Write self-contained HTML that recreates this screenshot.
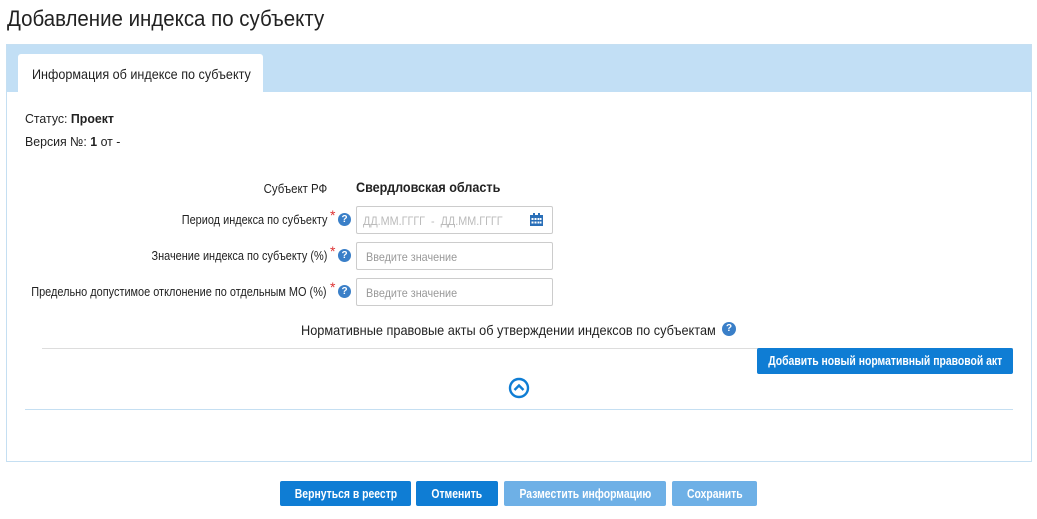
<!DOCTYPE html>
<html><head><meta charset="utf-8"><style>
body{margin:0;width:1037px;height:519px;background:#fff;font-family:"Liberation Sans",sans-serif;color:#222;position:relative;overflow:hidden}
.a{position:absolute;white-space:nowrap}
.c{transform:scaleX(.9);transform-origin:left center}
.cr{transform:scaleX(.88);transform-origin:right center}
.cc{display:inline-block;flex-shrink:0;transform:scaleX(.8);transform-origin:center}
.inp{position:absolute;left:356px;width:195px;height:26px;border:1px solid #ccc;border-radius:2px;background:#fff;font-size:12px;color:#999}
.lbl{position:absolute;right:710px;font-size:13px;white-space:nowrap;transform:scaleX(.84);transform-origin:right center}
.star{position:absolute;left:330px;color:#d33;font-size:14px}
.q{position:absolute;left:338px;width:13px;height:13px;border-radius:50%;background:#3a7fc8;color:#fff;font-size:10px;font-weight:bold;text-align:center;line-height:13px}
.btn{position:absolute;top:481px;height:25px;border-radius:2px;color:#fff;font-size:13px;line-height:25px;font-weight:bold;white-space:nowrap;overflow:hidden;display:flex;justify-content:center}
</style></head><body>
<div class="a" style="left:7px;top:6px;font-size:22px;color:#222;transform:scaleX(.93);transform-origin:left">Добавление индекса по субъекту</div>
<div class="a" style="left:6px;top:44px;width:1024px;height:416px;border:1px solid #c5dff2"></div>
<div class="a" style="left:7px;top:45px;width:1024px;height:47px;background:#c2dff5"></div>
<div class="a" style="left:18px;top:54px;width:245px;height:38px;background:#fff;border-radius:3px 3px 0 0"></div>
<div class="a c" style="left:32px;top:66px;font-size:14px">Информация об индексе по субъекту</div>
<div class="a" style="left:25px;top:111px;font-size:13px;transform:scaleX(.95);transform-origin:left">Статус: <b>Проект</b></div>
<div class="a" style="left:25px;top:134px;font-size:13px;transform:scaleX(.95);transform-origin:left">Версия №: <b>1</b> от -</div>
<div class="a cr" style="right:710px;top:181px;font-size:13px">Субъект РФ</div>
<div class="a c" style="left:356px;top:179px;font-size:14px;font-weight:bold">Свердловская область</div>
<div class="lbl" style="top:212px">Период индекса по субъекту</div><span class="star" style="top:207px">*</span><div class="q" style="top:213px">?</div>
<div class="lbl" style="top:248px">Значение индекса по субъекту (%)</div><span class="star" style="top:243px">*</span><div class="q" style="top:249px">?</div>
<div class="lbl" style="top:284px">Предельно допустимое отклонение по отдельным МО (%)</div><span class="star" style="top:279px">*</span><div class="q" style="top:285px">?</div>
<div class="inp" style="top:206px;color:#bbb"><span class="a c" style="left:6px;top:7px">ДД.ММ.ГГГГ&nbsp; - &nbsp;ДД.ММ.ГГГГ</span>
<svg class="a" style="left:173px;top:6px" width="13" height="13" viewBox="0 0 13 13"><rect x="0" y="2" width="13" height="11" fill="#2a6fb8"/><rect x="3" y="0" width="2" height="3" fill="#2a6fb8"/><rect x="8" y="0" width="2" height="3" fill="#2a6fb8"/><g fill="#fff"><rect x="1.5" y="5" width="2" height="2"/><rect x="4.5" y="5" width="2" height="2"/><rect x="7.5" y="5" width="2" height="2"/><rect x="10" y="5" width="1.5" height="2"/><rect x="1.5" y="8.5" width="2" height="2"/><rect x="4.5" y="8.5" width="2" height="2"/><rect x="7.5" y="8.5" width="2" height="2"/><rect x="10" y="8.5" width="1.5" height="2"/></g></svg></div>
<div class="inp" style="top:242px"><span class="a c" style="left:9px;top:7px">Введите значение</span></div>
<div class="inp" style="top:278px"><span class="a c" style="left:9px;top:7px">Введите значение</span></div>
<div class="a" style="left:301px;top:322px;font-size:14px;transform:scaleX(.91);transform-origin:left">Нормативные правовые акты об утверждении индексов по субъектам</div>
<div class="q" style="left:722px;top:322px;width:14px;height:14px;line-height:14px">?</div>
<div class="a" style="left:42px;top:348px;width:971px;height:1px;background:#ddd"></div>
<div class="btn" style="left:757px;top:348px;width:256px;height:26px;background:#0f7dd4;line-height:26px"><span class="cc">Добавить новый нормативный правовой акт</span></div>
<svg class="a" style="left:508px;top:377px" width="22" height="22" viewBox="0 0 22 22"><circle cx="11" cy="11" r="9" fill="none" stroke="#0f7dd4" stroke-width="2.4"/><path d="M6.5 13 L11 8.5 L15.5 13" fill="none" stroke="#0f7dd4" stroke-width="2.4"/></svg>
<div class="a" style="left:25px;top:409px;width:988px;height:1px;background:#c5dff2"></div>
<div class="btn" style="left:280px;width:131px;background:#0f7dd4"><span class="cc">Вернуться в реестр</span></div>
<div class="btn" style="left:416px;width:82px;background:#0f7dd4"><span class="cc">Отменить</span></div>
<div class="btn" style="left:504px;width:162px;background:#6eb0e6"><span class="cc">Разместить информацию</span></div>
<div class="btn" style="left:672px;width:85px;background:#6eb0e6"><span class="cc">Сохранить</span></div>
</body></html>
